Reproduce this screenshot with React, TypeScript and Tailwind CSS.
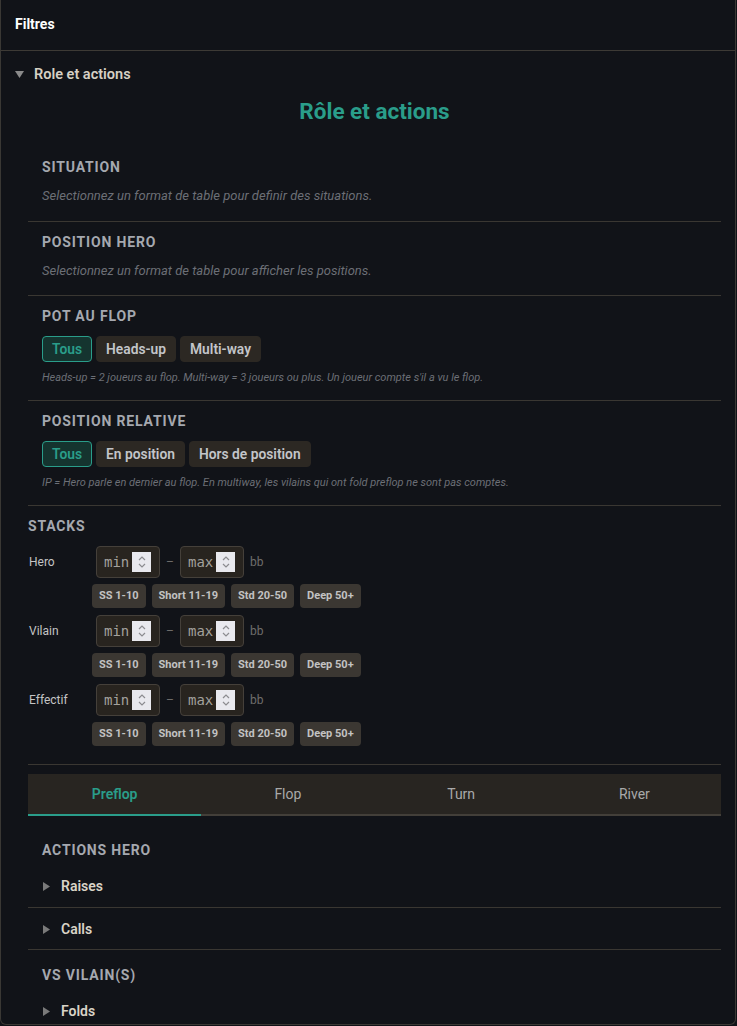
import { useState } from "react";

const presets = ["SS 1-10", "Short 11-19", "Std 20-50", "Deep 50+"];
const stackRows = ["Hero", "Vilain", "Effectif"];
const streets = ["Preflop", "Flop", "Turn", "River"];

const DownTriangle = () => (
  <svg width="9" height="7" viewBox="0 0 9 7" className="shrink-0">
    <polygon points="0,0 9,0 4.5,7" fill="#8a8a8a" />
  </svg>
);

const RightTriangle = () => (
  <svg width="7" height="9" viewBox="0 0 7 9" className="shrink-0">
    <polygon points="0,0 7,4.5 0,9" fill="#7a7a7a" />
  </svg>
);

// little up/down stepper drawn next to the number fields
const Spinner = () => (
  <span className="flex h-[20px] w-[19px] items-center justify-center bg-[#e9e9ee]">
    <svg width="10" height="16" viewBox="0 0 10 16">
      <path d="M2 6 L5 3 L8 6" stroke="#8c8c90" strokeWidth="1.2" fill="none" />
      <path d="M2 10 L5 13 L8 10" stroke="#8c8c90" strokeWidth="1.2" fill="none" />
    </svg>
  </span>
);

const NumberBox = ({ placeholder }: { placeholder: string }) => (
  <div className="flex h-[32px] w-[64px] items-center justify-between rounded-[4px] border border-[#45403a] bg-[#28241f] pl-[7px] pr-[8px]">
    <span className="font-['DejaVu_Sans_Mono',monospace] text-[14px] text-[#a3a19d]">{placeholder}</span>
    <Spinner />
  </div>
);

const Heading = ({ children }: { children: React.ReactNode }) => (
  <h3 className="text-[14px] font-bold uppercase leading-[18px] tracking-[0.06em] text-[#a5a8af]">{children}</h3>
);

const ToggleGroup = ({ options }: { options: string[] }) => {
  const [active, setActive] = useState(0);
  return (
    <div className="mt-[11px] flex gap-[4px]">
      {options.map((opt, i) => (
        <button
          key={opt}
          onClick={() => setActive(i)}
          className={
            i === active
              ? "h-[26px] rounded-[4px] border border-[#2a9d8a] bg-[#15342f] px-[9px] text-[13.8px] font-semibold text-[#2a9d8a]"
              : "h-[26px] rounded-[4px] border border-[#2c2823] bg-[#2c2823] px-[9px] text-[13.8px] font-semibold text-[#c3c5c9]"
          }
        >
          {opt}
        </button>
      ))}
    </div>
  );
};

const CollapsedRow = ({ label }: { label: string }) => (
  <div className="flex h-[20px] items-center gap-[11px] pl-[1px]">
    <RightTriangle />
    <span className="text-[14px] font-semibold text-[#d9d3c7]">{label}</span>
  </div>
);

export default function App() {
  const [tab, setTab] = useState(0);

  return (
    <div className="min-h-screen bg-[#111318] font-['Roboto',sans-serif]">
      <div className="w-[736px] rounded-b-[6px] border-x border-b border-[#3a3834] bg-[#111318]">
        {/* panel header */}
        <div className="flex h-[51px] items-center border-b border-[#3d3a35] pb-[1px] pl-[14px]">
          <h2 className="text-[14px] font-bold text-white">Filtres</h2>
        </div>

        <div className="pl-[14px] pr-[14px]">
          <div className="flex h-[44px] items-center gap-[10px] pt-[3px]">
            <DownTriangle />
            <span className="text-[14.5px] font-semibold text-[#d6d0c4]">Role et actions</span>
          </div>

          <div className="ml-[13px]">
            <h1 className="mt-[1px] text-center text-[22.5px] font-bold leading-[30px] text-[#2a9d8a]">Rôle et actions</h1>

            {/* situation */}
            <section className="mt-[32px] border-b border-[#3a3732] px-[14px] pb-[16px]">
              <Heading>Situation</Heading>
              <p className="mt-[11px] text-[13px] italic leading-[18px] text-[#6c6f76]">
                Selectionnez un format de table pour definir des situations.
              </p>
            </section>

            <section className="border-b border-[#3a3732] px-[14px] pb-[15px] pt-[11px]">
              <Heading>Position hero</Heading>
              <p className="mt-[11px] text-[13px] italic leading-[18px] text-[#6c6f76]">
                Selectionnez un format de table pour afficher les positions.
              </p>
            </section>

            <section className="border-b border-[#3a3732] px-[14px] pb-[15px] pt-[11px]">
              <Heading>Pot au flop</Heading>
              <ToggleGroup options={["Tous", "Heads-up", "Multi-way"]} />
              <p className="mt-[9px] text-[11px] italic leading-[14px] text-[#6c6f76]">
                Heads-up = 2 joueurs au flop. Multi-way = 3 joueurs ou plus. Un joueur compte s'il a vu le flop.
              </p>
            </section>

            <section className="border-b border-[#3a3732] px-[14px] pb-[15px] pt-[11px]">
              <Heading>Position relative</Heading>
              <ToggleGroup options={["Tous", "En position", "Hors de position"]} />
              <p className="mt-[9px] text-[11px] italic leading-[14px] text-[#6c6f76]">
                IP = Hero parle en dernier au flop. En multiway, les vilains qui ont fold preflop ne sont pas comptes.
              </p>
            </section>

            {/* stacks */}
            <section className="border-b border-[#3a3732] pb-[18px] pt-[11px]">
              <Heading>Stacks</Heading>
              <div className="mt-[11px] flex flex-col gap-[7px]">
                {stackRows.map((row) => (
                  <div key={row}>
                    <div className="flex items-center">
                      <span className="w-[68px] pl-[1px] text-[12px] text-[#c4c4c4]">{row}</span>
                      <NumberBox placeholder="min" />
                      <span className="w-[20px] text-center text-[12px] text-[#6e6c69]">–</span>
                      <NumberBox placeholder="max" />
                      <span className="ml-[6px] text-[12px] text-[#6f6e6c]">bb</span>
                    </div>
                    <div className="ml-[64px] mt-[6px] flex gap-[6px]">
                      {presets.map((p) => (
                        <button
                          key={p}
                          className="h-[24px] rounded-[4px] bg-[#3b3732] px-[7px] text-[11px] font-bold text-[#c2c2c2]"
                        >
                          {p}
                        </button>
                      ))}
                    </div>
                  </div>
                ))}
              </div>
            </section>

            {/* street tabs */}
            <div className="mt-[9px] grid grid-cols-4 border-b-2 border-[#433f39] bg-[#282521]">
              {streets.map((s, i) => (
                <button
                  key={s}
                  onClick={() => setTab(i)}
                  className={
                    i === tab
                      ? "-mb-[2px] h-[42px] border-b-2 border-[#2a9d8a] text-[14px] font-semibold text-[#2a9d8a]"
                      : "h-[40px] text-[14px] text-[#a9a9a9]"
                  }
                >
                  {s}
                </button>
              ))}
            </div>

            <div className="px-[14px] pt-[25px]">
              <Heading>Actions hero</Heading>
              <div className="mt-[17px] pb-[11px]">
                <CollapsedRow label="Raises" />
              </div>
            </div>
            <div className="border-t border-[#3a3732] px-[14px] pb-[10px] pt-[11px]">
              <CollapsedRow label="Calls" />
            </div>
            <div className="border-t border-[#3a3732] px-[14px] pb-[3px] pt-[16px]">
              <Heading>Vs vilain(s)</Heading>
              <div className="mt-[17px]">
                <CollapsedRow label="Folds" />
              </div>
            </div>
          </div>
        </div>
      </div>
    </div>
  );
}
